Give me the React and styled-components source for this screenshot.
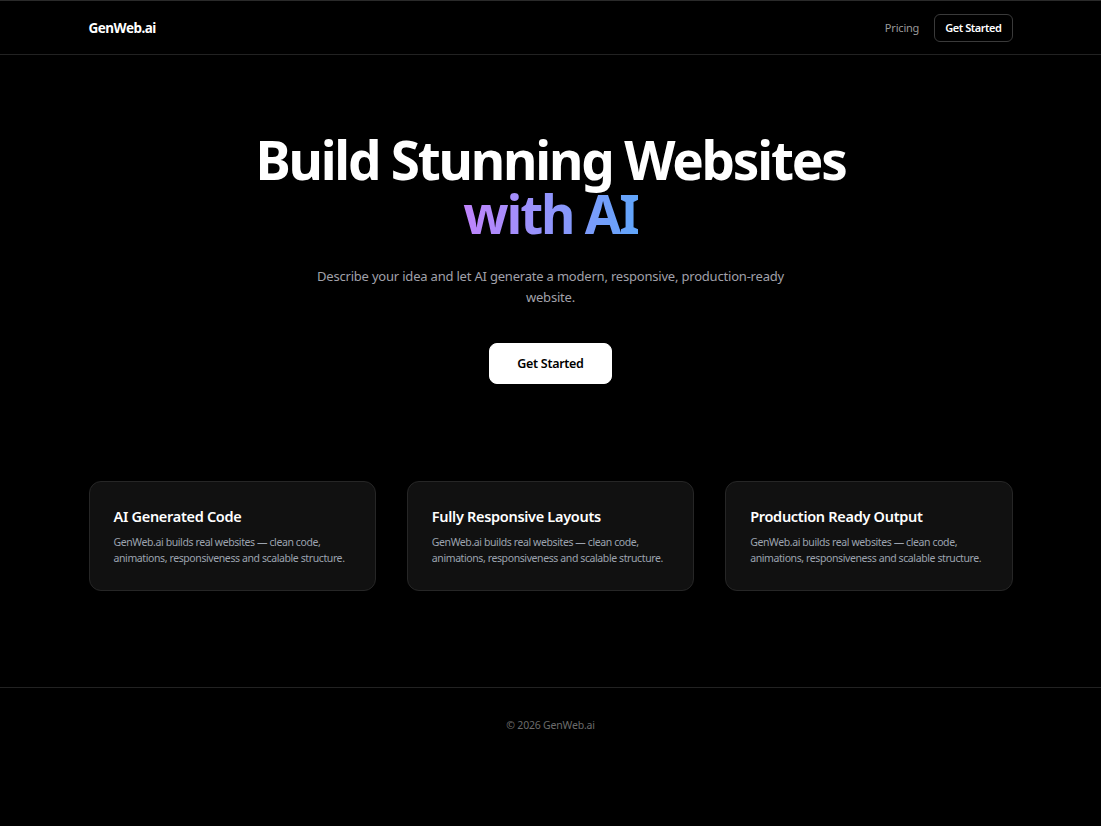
import React from 'react';
import styled, { createGlobalStyle } from 'styled-components';

const GlobalStyle = createGlobalStyle`
  html, body {
    margin: 0;
    padding: 0;
    background: #000;
    color: #fff;
    font-family: "Noto Sans", "Open Sans", sans-serif;
  }
  * { box-sizing: border-box; }
`;

const Page = styled.div`
  min-height: 826px;
  background: #000;
`;

const Container = styled.div`
  max-width: 924px;
  margin: 0 auto;
`;

// top navigation
const Header = styled.header`
  border-top: 1px solid #2a2a2a;
  border-bottom: 1px solid #222;
`;

const NavBar = styled(Container)`
  height: 53px;
  display: flex;
  align-items: center;
  justify-content: space-between;
`;

const Logo = styled.a`
  font-size: 13.5px;
  font-weight: 700;
  color: #fff;
  text-decoration: none;
  letter-spacing: -0.5px;
`;

const NavLinks = styled.nav`
  display: flex;
  align-items: center;
  gap: 15px;
`;

const NavLink = styled.a`
  font-size: 11px;
  color: #9a9a9a;
  text-decoration: none;
  letter-spacing: -0.2px;
`;

const Button = styled.a`
  display: inline-flex;
  align-items: center;
  justify-content: center;
  text-decoration: none;
  font-weight: 600;
  cursor: pointer;
  background: ${p => (p.$solid ? '#fff' : 'transparent')};
  color: ${p => (p.$solid ? '#000' : '#fff')};
  border: 1px solid ${p => (p.$solid ? '#fff' : '#3a3a3a')};
  border-radius: ${p => (p.$solid ? '8px' : '6px')};
  height: ${p => (p.$solid ? '41px' : '28px')};
  padding: 0 ${p => (p.$solid ? '27px' : '10px')};
  font-size: ${p => (p.$solid ? '12.5px' : '11px')};
  letter-spacing: ${p => (p.$solid ? '-0.3px' : '-0.45px')};
`;

// hero section
const Hero = styled.section`
  display: flex;
  flex-direction: column;
  align-items: center;
  text-align: center;
  padding: 78px 0 0;
`;

const Title = styled.h1`
  margin: 0;
  font-size: 53px;
  line-height: 54px;
  font-weight: 700;
  letter-spacing: -2.2px;
`;

const Gradient = styled.span`
  background: linear-gradient(90deg, #c084fc, #60a5fa);
  -webkit-background-clip: text;
  background-clip: text;
  color: transparent;
`;

const Subtitle = styled.p`
  margin: 25px 0 0;
  max-width: 490px;
  font-size: 13px;
  line-height: 21px;
  color: #a1a1aa;
  letter-spacing: -0.2px;
`;

const HeroAction = styled.div`
  margin-top: 35px;
`;

// feature cards
const Features = styled(Container)`
  display: grid;
  grid-template-columns: repeat(3, 1fr);
  gap: 31px;
  margin-top: 97px;
`;

const Card = styled.div`
  height: 110px;
  background: #111;
  border: 1px solid #262626;
  border-radius: 12px;
  padding: 24px 24px;
`;

const CardTitle = styled.h3`
  margin: 0;
  font-size: 14.5px;
  font-weight: 600;
  line-height: 20px;
  letter-spacing: -0.3px;
`;

const CardText = styled.p`
  margin: 8px 0 0;
  font-size: 10.5px;
  line-height: 16px;
  color: #9ca3af;
  letter-spacing: -0.4px;
`;

const Footer = styled.footer`
  margin-top: 96px;
  border-top: 1px solid #222;
  padding: 30px 0 40px;
  text-align: center;
  font-size: 10.5px;
  color: #6b6b6b;
  letter-spacing: -0.2px;
`;

const features = [
  'AI Generated Code',
  'Fully Responsive Layouts',
  'Production Ready Output',
];

export default function App() {
  return (
    <Page>
      <GlobalStyle />
      <Header>
        <NavBar>
          <Logo href="#">GenWeb.ai</Logo>
          <NavLinks>
            <NavLink href="#">Pricing</NavLink>
            <Button href="#">Get Started</Button>
          </NavLinks>
        </NavBar>
      </Header>

      <Hero>
        <Title>
          Build Stunning Websites
          <br />
          <Gradient>with AI</Gradient>
        </Title>
        <Subtitle>
          Describe your idea and let AI generate a modern, responsive, production-ready website.
        </Subtitle>
        <HeroAction>
          <Button $solid href="#">Get Started</Button>
        </HeroAction>
      </Hero>

      <Features>
        {features.map(title => (
          <Card key={title}>
            <CardTitle>{title}</CardTitle>
            <CardText>
              GenWeb.ai builds real websites — clean code, animations, responsiveness and scalable structure.
            </CardText>
          </Card>
        ))}
      </Features>

      <Footer>© 2026 GenWeb.ai</Footer>
    </Page>
  );
}
